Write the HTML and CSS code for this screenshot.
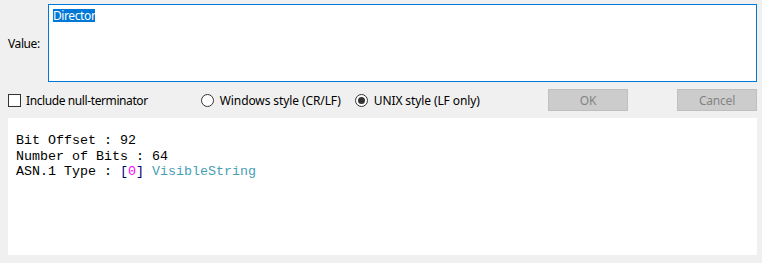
FILE: index.html
```html
<!DOCTYPE html>
<html>
<head>
<meta charset="utf-8">
<link rel="stylesheet" href="styles.css">
</head>
<body>
<div class="dialog">
  <div class="value-row">
    <label class="value-label">Value:</label>
    <div class="textbox"><span class="sel">Director</span></div>
  </div>
  <div class="options-row">
    <div class="check">
      <span class="checkbox"></span>
      <span class="opt-text">Include null-terminator</span>
    </div>
    <div class="radio r-win">
      <span class="radio-dot"></span>
      <span class="opt-text">Windows style (CR/LF)</span>
    </div>
    <div class="radio r-unix">
      <span class="radio-dot on"></span>
      <span class="opt-text">UNIX style (LF only)</span>
    </div>
    <button class="btn btn-ok" disabled>OK</button>
    <button class="btn btn-cancel" disabled>Cancel</button>
  </div>
  <div class="info">
    <div class="line">Bit Offset : 92</div>
    <div class="line">Number of Bits : 64</div>
    <div class="line">ASN.1 Type : <span class="br">[</span><span class="tag">0</span><span class="br">]</span> <span class="type">VisibleString</span></div>
  </div>
</div>
</body>
</html>
```

FILE: styles.css
```css
html, body {
  margin: 0;
  padding: 0;
  background: #f0f0f0;
  width: 762px;
  height: 263px;
  overflow: hidden;
}
.dialog {
  font-family: "Noto Sans", "Open Sans", sans-serif;
  font-size: 12px;
  letter-spacing: -0.4px;
  color: #000;
  padding: 4px 5px 0 8px;
}
.value-row {
  display: flex;
  align-items: center;
  height: 78px;
}
.value-label {
  width: 40px;
}
.textbox {
  box-sizing: border-box;
  width: 709px;
  height: 78px;
  background: #fff;
  border: 1px solid #0078d7;
  padding: 4px 0 0 4px;
  line-height: 13px;
}
.sel {
  display: inline-block;
  background: #0078d7;
  color: #fff;
  height: 13px;
  line-height: 13px;
}
.options-row {
  display: flex;
  align-items: center;
  height: 22px;
  margin-top: 7px;
}
.check, .radio {
  display: flex;
  align-items: center;
}
.checkbox {
  box-sizing: border-box;
  width: 13px;
  height: 13px;
  border: 1px solid #333;
  background: #fff;
  margin-right: 5px;
}
.radio-dot {
  box-sizing: border-box;
  width: 13px;
  height: 13px;
  border: 1px solid #333;
  border-radius: 50%;
  background: #fff;
  margin-right: 6px;
  display: flex;
  align-items: center;
  justify-content: center;
}
.radio-dot.on::after {
  content: "";
  width: 7px;
  height: 7px;
  border-radius: 50%;
  background: #333;
}
.r-win { margin-left: 53px; }
.r-win .opt-text { letter-spacing: -0.1px; }
.r-unix { margin-left: 14px; }
.r-unix .opt-text { letter-spacing: -0.1px; }
.btn {
  box-sizing: border-box;
  height: 22px;
  width: 80px;
  background: #cccccc;
  border: 1px solid #bfbfbf;
  color: #838383;
  font-family: inherit;
  font-size: 12px;
  letter-spacing: -0.2px;
  padding: 0;
}
.btn-ok { margin-left: auto; }
.btn-cancel { margin-left: 49px; }
.info {
  margin-top: 7px;
  width: 749px;
  height: 137px;
  box-sizing: border-box;
  background: #fff;
  padding: 15px 8px 0 8px;
  font-family: "Liberation Mono", "Courier New", monospace;
  font-size: 13.33px;
  letter-spacing: 0;
  line-height: 15.5px;
  color: #000;
}
.br { color: #000080; }
.tag { color: #ff00ff; }
.type { color: #48a0b4; }
```
